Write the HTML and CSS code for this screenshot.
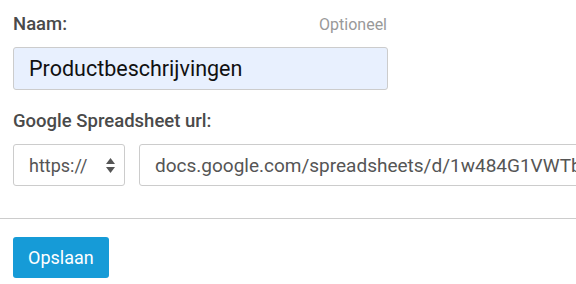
FILE: index.html
```html
<!DOCTYPE html>
<html lang="nl">
<head>
    <meta charset="UTF-8">
    <meta name="viewport" content="width=device-width, initial-scale=1.0">
    <title>Spreadsheet koppelen</title>
    <link rel="stylesheet" href="styles.css">
</head>
<body>
    <form class="sheet-form">
        <div class="field">
            <div class="label-row">
                <label for="naam">Naam:</label>
                <span class="hint">Optioneel</span>
            </div>
            <input id="naam" class="input input-filled" type="text" value="Productbeschrijvingen">
        </div>

        <div class="field">
            <div class="label-row">
                <label for="url">Google Spreadsheet url:</label>
            </div>
            <div class="url-row">
                <div class="select">
                    <span>https://</span>
                    <svg class="arrows" width="9" height="15" viewBox="0 0 9 15">
                        <path d="M4.5 0 L9 6 L0 6 Z" fill="#555"/>
                        <path d="M0 9 L9 9 L4.5 15 Z" fill="#555"/>
                    </svg>
                </div>
                <input id="url" class="input input-url" type="text" value="docs.google.com/spreadsheets/d/1w484G1VWTbVx0">
            </div>
        </div>

        <hr class="divider">

        <div class="actions">
            <button type="button" class="button">Opslaan</button>
        </div>
    </form>
</body>
</html>
```

FILE: styles.css
```css
html, body { margin: 0; padding: 0; background: #fff; overflow: hidden; }
body { font-family: Roboto, "Liberation Sans", sans-serif; color: #444; }
.sheet-form { padding-top: 13px; }
.field { padding: 0 13px; }
.field + .field { margin-top: 20px; }
.label-row { width: 374px; display: flex; justify-content: space-between; align-items: baseline; height: 25px; margin-bottom: 9px; }
.label-row label { font-size: 18.5px; font-weight: 500; color: #4a4a4a; }
.hint { font-size: 16px; color: #999; }
.input { box-sizing: border-box; height: 43px; border: 1px solid #ccc; border-radius: 3px; padding: 0 15px; font-family: inherit; font-size: 19px; color: #555; background: #fff; outline: none; }
.input-filled { width: 375px; background: #e8f0fe; color: #111; font-size: 21.5px; }
.url-row { display: flex; gap: 14px; width: 700px; }
.select { box-sizing: border-box; width: 112px; height: 42px; border: 1px solid #ccc; border-radius: 3px; display: flex; align-items: center; justify-content: space-between; padding: 0 9px 0 15px; font-size: 18px; color: #555; }
.input-url { flex: 1; height: 42px; }
.divider { border: none; border-top: 1px solid #ccc; margin: 32px 0 18px; }
.actions { padding: 0 13px; }
.button { height: 41px; padding: 0 15px; border: none; border-radius: 3px; background: #169bd7; color: #fff; font-family: inherit; font-size: 18px; cursor: pointer; }
.button:hover { background: #1289c0; }
```
